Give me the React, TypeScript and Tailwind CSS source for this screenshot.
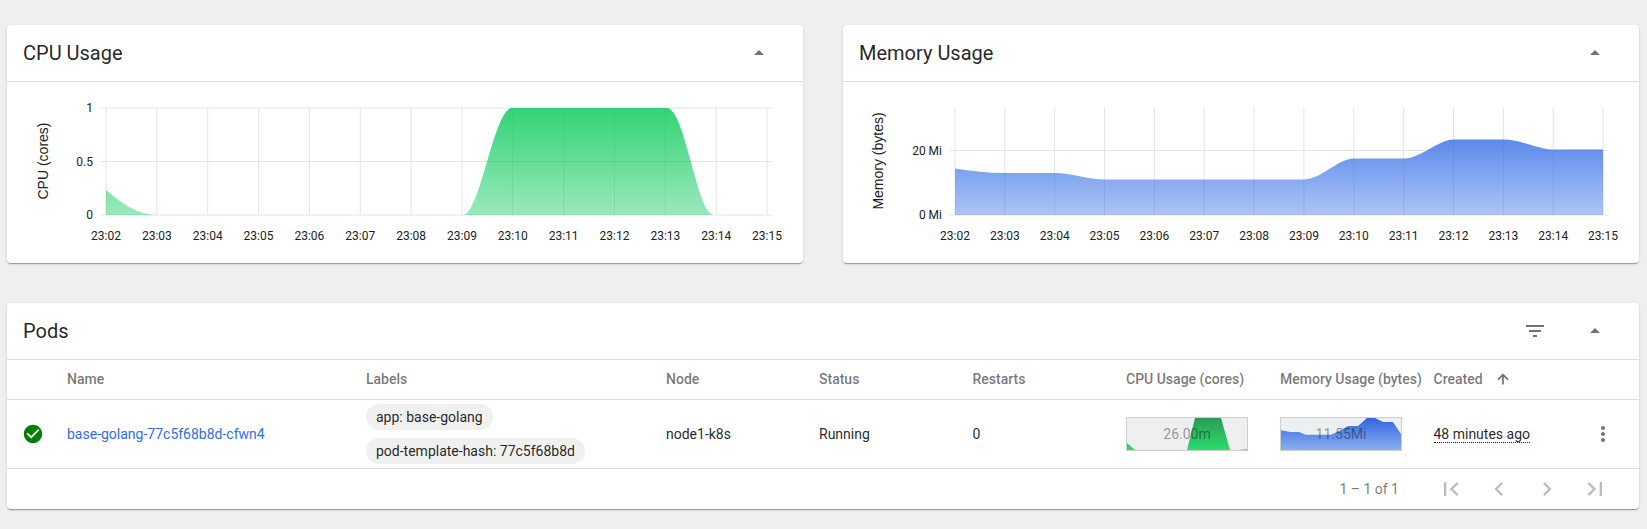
const tickLabels = ['23:02','23:03','23:04','23:05','23:06','23:07','23:08','23:09','23:10','23:11','23:12','23:13','23:14','23:15']

const roboto = { fontFamily: 'Roboto, sans-serif' }

type ChartProps = {
  id: string
  yLabel: string
  yLabelX: number
  startX: number
  stepX: number
  gridLeft: number
  gridRight: number
  yTicks: { y: number; label: string }[]
  area: string
  top: string
}

const Chart = ({ id, yLabel, yLabelX, startX, stepX, gridLeft, gridRight, yTicks, area, top }: ChartProps) => {
  return (
    <svg className="block w-full h-[181px]" viewBox="0 0 796 181">
      <defs>
        <linearGradient id={id} gradientUnits="userSpaceOnUse" x1="0" y1={id === 'cpu' ? 26 : 57} x2="0" y2="133">
          <stop offset="0%" stopColor={top} stopOpacity="0.8" />
          <stop offset="100%" stopColor={top} stopOpacity="0.4" />
        </linearGradient>
      </defs>
      {tickLabels.map((t, i) => (
        <line key={t} x1={startX + stepX * i} x2={startX + stepX * i} y1="25.5" y2="133" stroke="#e4e4e4" strokeWidth="1" />
      ))}
      {yTicks.map((t) => (
        <line key={t.label} x1={gridLeft} x2={gridRight} y1={t.y} y2={t.y} stroke="#e4e4e4" strokeWidth="1" />
      ))}
      <path d={area} fill={`url(#${id})`} />
      {yTicks.map((t) => (
        <text key={t.label} x={gridLeft - 8} y={t.y + 4} textAnchor="end" fontSize="12" fill="#212121" style={roboto}>{t.label}</text>
      ))}
      {tickLabels.map((t, i) => (
        <text key={t} x={startX + stepX * i} y="158" textAnchor="middle" fontSize="12" fill="#212121" style={roboto}>{t}</text>
      ))}
      <text
        transform={`translate(${yLabelX} 79) rotate(-90)`}
        textAnchor="middle"
        fontSize="14"
        fill="#212121"
        style={{ fontFamily: '"Liberation Sans", sans-serif' }}
      >
        {yLabel}
      </text>
    </svg>
  )
}

const Caret = () => (
  <svg className="w-6 h-6 fill-black/55" viewBox="0 0 24 24"><path d="M7 14l5-5 5 5z" /></svg>
)

const CardHeader = ({ title, filter }: { title: string; filter?: boolean }) => (
  <div className="h-[57px] flex items-center justify-between pl-4 pr-8 border-b border-[#e0e0e0]">
    <h2 className="text-[20px] text-black/87 font-normal">{title}</h2>
    <div className="flex items-center gap-9">
      {filter && (
        <svg className="w-6 h-6 fill-black/55" viewBox="0 0 24 24"><path d="M10 18h4v-2h-4v2zM3 6v2h18V6H3zm3 7h12v-2H6v2z" /></svg>
      )}
      <Caret />
    </div>
  </div>
)

const cardClass = "bg-white rounded-[4px] shadow-[0_2px_1px_-1px_rgba(0,0,0,0.2),0_1px_1px_0_rgba(0,0,0,0.14),0_1px_3px_0_rgba(0,0,0,0.12)]"

const rowGrid = "grid grid-cols-[60px_299px_300px_153px_153.5px_153.5px_154px_153.5px_1fr] items-center"

const Sparkline = ({ id, label, points, from, to }: { id: string; label: string; points: string; from: string; to: string }) => (
  <div className="relative w-[122px] h-[34px] border border-[#cfcfcf] bg-[#eeeff1]">
    <svg className="absolute inset-0 w-full h-full" viewBox="0 0 120 32" preserveAspectRatio="none">
      <defs>
        <linearGradient id={id} x1="0" y1="0" x2="0" y2="1">
          <stop offset="0%" stopColor={from} />
          <stop offset="100%" stopColor={to} />
        </linearGradient>
      </defs>
      <path d={points} fill={`url(#${id})`} />
    </svg>
    <div className="absolute inset-0 flex items-center justify-center text-sm text-black/40">{label}</div>
  </div>
)

const pagers = [
  'M18.41 16.59L13.82 12l4.59-4.59L17 6l-6 6 6 6zM6 6h2v12H6z',
  'M15.41 7.41L14 6l-6 6 6 6 1.41-1.41L10.83 12z',
  'M10 6L8.59 7.41 13.17 12l-4.58 4.59L10 18l6-6z',
  'M5.59 7.41L10.18 12l-4.59 4.59L7 18l6-6-6-6zM16 6h2v12h-2z',
]

export default function App() {
  return (
    <div className="min-h-screen bg-[#eeeff1] pt-[25px] pl-[7px] pr-2" style={roboto}>
      <div className="grid grid-cols-2 gap-10">
        <div className={`${cardClass} h-[238px]`}>
          <CardHeader title="CPU Usage" />
          <Chart
            id="cpu"
            yLabel="CPU (cores)"
            yLabelX={41}
            startX={99}
            stepX={50.85}
            gridLeft={94}
            gridRight={765}
            yTicks={[
              { y: 26, label: '1' },
              { y: 79.5, label: '0.5' },
              { y: 133, label: '0' },
            ]}
            area="M99 108 C 110 117 128 133 150 133 L 99 133 Z M456 133 C 473 133 487 26 505 26 L 660 26 C 678 26 690 133 707 133 Z"
            top="#00c853"
          />
        </div>
        <div className={`${cardClass} h-[238px]`}>
          <CardHeader title="Memory Usage" />
          <Chart
            id="mem"
            yLabel="Memory (bytes)"
            yLabelX={40}
            startX={112}
            stepX={49.85}
            gridLeft={107}
            gridRight={765}
            yTicks={[
              { y: 68.5, label: '20 Mi' },
              { y: 133, label: '0 Mi' },
            ]}
            area="M112 86.5 C 128 89 145 91 162 91 L 212 91 C 228 91 245 97.5 262 97.5 L 461 97.5 C 478 97.5 495 76.5 511 76.5 L 561 76.5 C 578 76.5 595 57.5 611 57.5 L 661 57.5 C 678 57.5 695 67.5 711 67.5 L 760 67.5 L 760 133 L 112 133 Z"
            top="#326de6"
          />
        </div>
      </div>

      <div className={`${cardClass} mt-10`}>
        <CardHeader title="Pods" filter />
        <div className={`${rowGrid} h-10 pb-0.5 border-b border-[#e0e0e0] text-sm font-medium text-black/55`}>
          <span />
          <span>Name</span>
          <span>Labels</span>
          <span>Node</span>
          <span>Status</span>
          <span>Restarts</span>
          <span>CPU Usage (cores)</span>
          <span>Memory Usage (bytes)</span>
          <span className="flex items-center gap-[12px]">
            Created
            <svg className="w-4 h-4 fill-black/55 stroke-black/30 stroke-1" viewBox="0 0 24 24"><path d="M4 12l1.41 1.41L11 7.83V20h2V7.83l5.58 5.59L20 12l-8-8-8 8z" /></svg>
          </span>
        </div>
        <div className={`${rowGrid} h-[69px] border-b border-[#e0e0e0] text-sm text-black/87`}>
          <span className="pl-[15px]">
            <svg className="w-[22px] h-[22px] fill-[#008000]" viewBox="0 0 24 24"><path d="M12 2C6.48 2 2 6.48 2 12s4.48 10 10 10 10-4.48 10-10S17.52 2 12 2zm-2 15l-5-5 1.41-1.41L10 14.17l7.59-7.59L19 8l-9 9z" /></svg>
          </span>
          <a className="text-[#326de6]">base-golang-77c5f68b8d-cfwn4</a>
          <div className="flex flex-col items-start gap-2">
            <span className="h-[26px] leading-[26px] px-[10px] rounded-[13px] bg-[#f0f0f0]">app: base-golang</span>
            <span className="h-[26px] leading-[26px] px-[10px] rounded-[13px] bg-[#f0f0f0]">pod-template-hash: 77c5f68b8d</span>
          </div>
          <span>node1-k8s</span>
          <span>Running</span>
          <span>0</span>
          <Sparkline
            id="sparkCpu"
            label="26.00m"
            points="M0 25 L8 32 L0 32 Z M60 32 L68 0 L94 0 L103 32 Z M112 32 L120 31 L120 32 Z"
            from="#2c9a55"
            to="#2bdc6e"
          />
          <Sparkline
            id="sparkMem"
            label="11.55Mi"
            points="M0 12.3 L9 14 L18 14 L24.7 16.7 L50 16.7 L60 12 L67 8 L77 8 L86 0 L94 0 L102 4 L112 4 L120 16 L120 32 L0 32 Z"
            from="#2f66e0"
            to="#8caef0"
          />
          <div className="flex items-center justify-between pr-[24px]">
            <span className="border-b border-dotted border-black/87 leading-[16px]">48 minutes ago</span>
            <svg className="w-6 h-6 fill-black/55" viewBox="0 0 24 24"><path d="M12 8c1.1 0 2-.9 2-2s-.9-2-2-2-2 .9-2 2 .9 2 2 2zm0 2c-1.1 0-2 .9-2 2s.9 2 2 2 2-.9 2-2-.9-2-2-2zm0 6c-1.1 0-2 .9-2 2s.9 2 2 2 2-.9 2-2-.9-2-2-2z" /></svg>
          </div>
        </div>
        <div className="h-10 flex items-center justify-end pr-5 text-sm text-black/55">
          <span className="mr-[28px]">1 – 1 of 1</span>
          {pagers.map((d) => (
            <span key={d} className="w-12 flex justify-center">
              <svg className="w-7 h-7 fill-black/26" viewBox="0 0 24 24"><path d={d} /></svg>
            </span>
          ))}
        </div>
      </div>
    </div>
  )
}
